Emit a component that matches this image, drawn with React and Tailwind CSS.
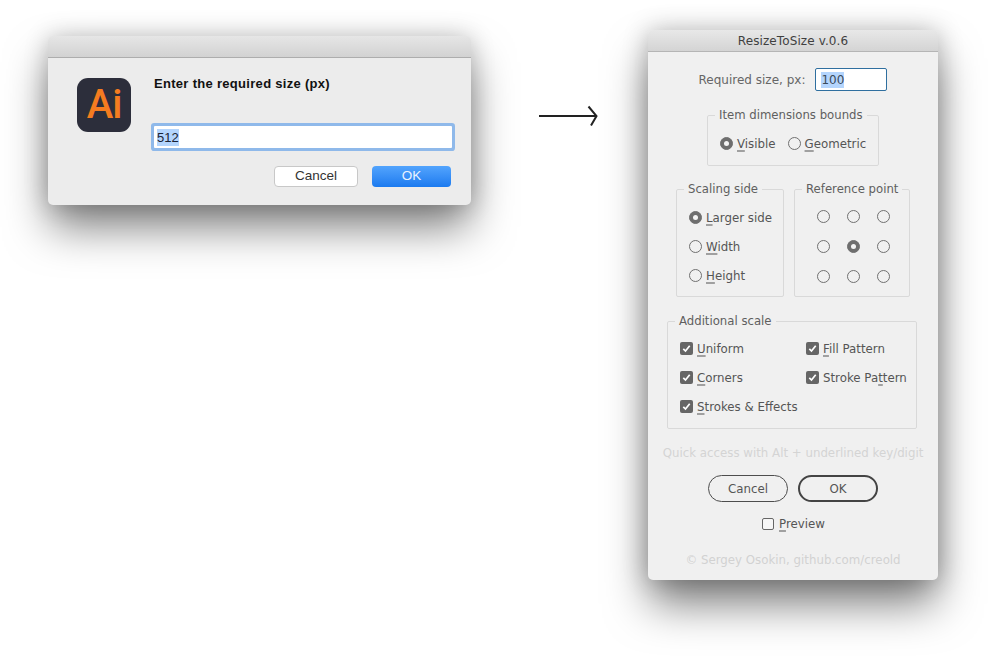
import React from 'react'

const Radio = ({ checked }) => (
  <span className={`flex h-[13px] w-[13px] shrink-0 items-center justify-center rounded-full border border-[#707070] ${checked ? 'bg-[#6e6e6e]' : 'bg-[#f1f1f1]'}`}>
    {checked && <span className="h-[5px] w-[5px] rounded-full bg-[#f4f4f4]" />}
  </span>
)

const Check = () => (
  <span className="flex h-[13px] w-[13px] shrink-0 items-center justify-center rounded-[2px] bg-[#666666]">
    <svg width="9" height="9" viewBox="0 0 9 9" fill="none">
      <path d="M1.3 4.8 L3.5 7 L7.7 1.8" stroke="#ffffff" strokeWidth="1.7" />
    </svg>
  </span>
)

// underlined mnemonic letter
const U = ({ children }) => (
  <span className="underline decoration-[#a0a0a0] decoration-[1.5px] underline-offset-[2px] [text-decoration-skip-ink:none]">{children}</span>
)

const Group = ({ title, className, children }) => (
  <fieldset className={`rounded-[2px] border border-[#d9d9d9] ${className}`}>
    <legend className="ml-[7px] px-[4px] text-[11.7px] leading-4 text-[#5f5f5f]">{title}</legend>
    {children}
  </fieldset>
)

const RadioRow = ({ checked, children }) => (
  <div className="flex h-[29px] items-center gap-[4px]">
    <Radio checked={checked} />
    <span>{children}</span>
  </div>
)

const CheckRow = ({ children }) => (
  <div className="flex h-[29px] items-center gap-[4px]">
    <Check />
    <span>{children}</span>
  </div>
)

function MacDialog() {
  return (
    <div className="ml-[48px] mt-[36px] w-[423px] shrink-0 overflow-hidden rounded-[5px] bg-[#ececec] font-['Liberation_Sans',sans-serif] shadow-[0_24px_44px_-2px_rgba(0,0,0,0.5),0_0_24px_rgba(0,0,0,0.2)]">
      <div className="h-[22px] border-b border-[#adadad] bg-gradient-to-b from-[#e6e6e6] to-[#d2d2d2]" />
      <div className="flex pl-[29px] pt-[18px] pb-[18px]">
        <div className="mt-[2px] flex h-[54px] w-[54px] shrink-0 items-center justify-center rounded-[11px] bg-[#2c2e3b] font-['Roboto',sans-serif] text-[40px] font-medium leading-none tracking-[-1px] text-[#f47c20]">
          Ai
        </div>
        <div className="ml-[23px] w-[298px]">
          <div className="text-[13px] font-bold leading-4 tracking-[0.3px] text-[#111111]">Enter the required size (px)</div>
          <div className="mt-[34px] flex h-[22px] items-center rounded-[1px] bg-white pl-[3px] text-[13px] text-[#1a2233] shadow-[0_0_0_3px_#8fb9ea]">
            <span className="bg-[#b4d5fd] leading-[17px]">512</span>
          </div>
          <div className="mr-[1px] mt-[18px] flex justify-end gap-[14px] text-[13.5px]">
            <div className="flex h-[21px] w-[84px] items-center justify-center rounded-[4px] border border-[#c8c8c8] bg-white text-[#333333]">Cancel</div>
            <div className="flex h-[21px] w-[79px] items-center justify-center rounded-[4px] bg-gradient-to-b from-[#52a4fd] to-[#1a7aef] text-[#eaf3ff]">OK</div>
          </div>
        </div>
      </div>
    </div>
  )
}

function Arrow() {
  return (
    <svg className="ml-[67px] mt-[104px] shrink-0" width="60" height="24" viewBox="0 0 60 24" fill="none">
      <path d="M1 12 H58" stroke="#222222" strokeWidth="2" />
      <path d="M50.5 2.5 L58.5 12 L53 21.5" stroke="#222222" strokeWidth="2" />
    </svg>
  )
}

function ResizeDialog() {
  return (
    <div className="ml-[50px] mt-[30px] w-[290px] shrink-0 overflow-hidden rounded-[5px] bg-[#f0f0f0] font-['DejaVu_Sans',sans-serif] text-[11.8px] leading-4 text-[#555555] shadow-[0_26px_44px_-2px_rgba(0,0,0,0.5),0_0_26px_rgba(0,0,0,0.24)]">
      <div className="flex h-[22px] items-center justify-center border-b border-[#b5b5b5] bg-gradient-to-b from-[#e8e8e8] to-[#d4d4d4] pt-[1px] text-[12px] tracking-[0.1px] text-[#3f3f3f]">
        ResizeToSize v.0.6
      </div>
      <div className="flex flex-col items-center pb-[12px] pt-[16px]">
        <div className="flex items-center gap-[10px]">
          <span className="text-[12px] text-[#666666]">Required size, px:</span>
          <div className="flex h-[23px] w-[72px] items-center rounded-[2px] border border-[#2f6f9f] bg-white pl-[5px] text-[12px] text-[#3a4a5a]">
            <span className="bg-[#b4d5fd]">100</span>
          </div>
        </div>

        <Group title="Item dimensions bounds" className="mt-[16px] h-[59px] w-[172px]">
          <div className="flex items-center pl-[12px] pt-[6px]">
            <RadioRow checked><U>V</U>isible</RadioRow>
            <div className="ml-[12px]">
              <RadioRow><U>G</U>eometric</RadioRow>
            </div>
          </div>
        </Group>

        <div className="mt-[15px] flex gap-[10px]">
          <Group title="Scaling side" className="h-[116px] w-[108px]">
            <div className="pl-[12px] pt-[6px]">
              <RadioRow checked><U>L</U>arger side</RadioRow>
              <RadioRow><U>W</U>idth</RadioRow>
              <RadioRow><U>H</U>eight</RadioRow>
            </div>
          </Group>
          <Group title="Reference point" className="h-[116px] w-[116px]">
            <div className="grid grid-cols-[30px_30px_30px] grid-rows-[30px_30px_30px] place-items-center pl-[13px] pt-[4px]">
              <Radio /><Radio /><Radio />
              <Radio /><Radio checked /><Radio />
              <Radio /><Radio /><Radio />
            </div>
          </Group>
        </div>

        <Group title="Additional scale" className="mr-[2px] mt-[16px] h-[116px] w-[250px]">
          <div className="grid grid-cols-[126px_1fr] pl-[12px] pt-[5px]">
            <CheckRow><U>U</U>niform</CheckRow>
            <CheckRow><U>F</U>ill Pattern</CheckRow>
            <CheckRow><U>C</U>orners</CheckRow>
            <CheckRow>Stroke Pa<U>t</U>tern</CheckRow>
            <CheckRow><U>S</U>trokes &amp; Effects</CheckRow>
          </div>
        </Group>

        <div className="mt-[16px] text-[#d4d4d4]">Quick access with Alt + underlined key/digit</div>

        <div className="mt-[14px] flex gap-[10px]">
          <div className="flex h-[27px] w-[80px] items-center justify-center rounded-full border border-[#4d4d4d]">Cancel</div>
          <div className="flex h-[27px] w-[80px] items-center justify-center rounded-full border-2 border-[#444444]">OK</div>
        </div>

        <div className="ml-[1px] mt-[14px] flex items-center gap-[5px]">
          <span className="h-[12px] w-[12px] rounded-[2px] border border-[#666666] bg-[#f6f6f6]" />
          <span><U>P</U>review</span>
        </div>

        <div className="mt-[20px] text-[#d2d2d2]">© Sergey Osokin, github.com/creold</div>
      </div>
    </div>
  )
}

export default function App() {
  return (
    <div className="flex h-[656px] w-[1005px] items-start overflow-hidden bg-white">
      <MacDialog />
      <Arrow />
      <ResizeDialog />
    </div>
  )
}
